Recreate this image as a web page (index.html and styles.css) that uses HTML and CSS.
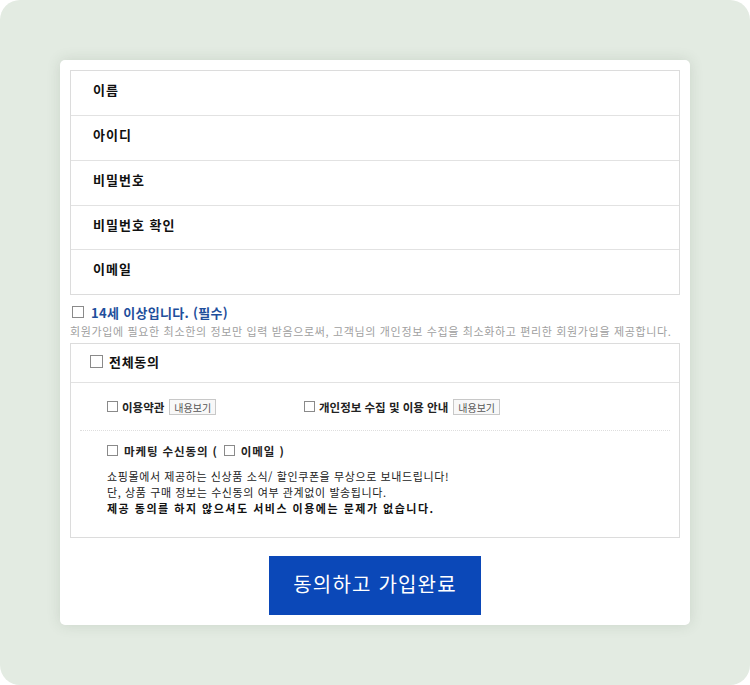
FILE: index.html
```html
<!DOCTYPE html>
<html lang="ko">
<head>
    <meta charset="UTF-8">
    <title>회원가입</title>
    <link rel="stylesheet" href="styles.css">
</head>
<body>

    <div class="frame">
        <div class="card">

            <ul class="fields">
                <li>이름</li>
                <li>아이디</li>
                <li>비밀번호</li>
                <li>비밀번호 확인</li>
                <li>이메일</li>
            </ul>

            <div class="age-check">
                <span class="box"></span>
                <span class="age-text">14세 이상입니다. (필수)</span>
            </div>
            <p class="notice">회원가입에 필요한 최소한의 정보만 입력 받음으로써, 고객님의 개인정보 수집을 최소화하고 편리한 회원가입을 제공합니다.</p>

            <div class="agree">
                <div class="agree-all">
                    <span class="box"></span>
                    <span>전체동의</span>
                </div>

                <div class="agree-body">
                    <div class="agree-row">
                        <div class="agree-item item-terms">
                            <span class="box small"></span>
                            <span>이용약관</span>
                            <button class="view-btn">내용보기</button>
                        </div>
                        <div class="agree-item">
                            <span class="box small"></span>
                            <span>개인정보 수집 및 이용 안내</span>
                            <button class="view-btn">내용보기</button>
                        </div>
                    </div>

                    <div class="agree-marketing">
                        <div class="agree-item marketing-label">
                            <span class="box small"></span>
                            <span>마케팅 수신동의 (</span>
                            <span class="box small"></span>
                            <span>이메일 )</span>
                        </div>
                        <p class="marketing-text">
                            쇼핑몰에서 제공하는 신상품 소식/ 할인쿠폰을 무상으로 보내드립니다!<br>
                            단, 상품 구매 정보는 수신동의 여부 관계없이 발송됩니다.<br>
                            <strong>제공 동의를 하지 않으셔도 서비스 이용에는 문제가 없습니다.</strong>
                        </p>
                    </div>
                </div>
            </div>

            <div class="submit-wrap">
                <button class="submit-btn">동의하고 가입완료</button>
            </div>

        </div>
    </div>

</body>
</html>
```

FILE: styles.css
```css
* {
    margin: 0;
    padding: 0;
    box-sizing: border-box;
}

body {
    font-family: "Noto Sans CJK KR", "Noto Sans", sans-serif;
    background-color: #fff;
    color: #222;
}

.frame {
    width: 750px;
    height: 685px;
    padding: 60px;
    background-color: #e3ebe2;
    border-radius: 20px;
}

.card {
    width: 630px;
    height: 565px;
    padding: 10px;
    background-color: #fff;
    border-radius: 5px;
    box-shadow: 0 0 14px rgba(60, 80, 60, 0.15);
}

/* input labels */
.fields {
    list-style-type: none;
    width: 610px;
    border: 1px solid #dcdcdc;
}

    .fields li {
        height: 45px;
        padding: 0 0 7px 22px;
        display: flex;
        align-items: center;
        font-size: 13px;
        font-weight: bold;
        color: #111;
        letter-spacing: 1px;
        border-top: 1px solid #e2e2e2;
    }

        .fields li:first-child {
            height: 44px;
            border-top: none;
        }

        .fields li:nth-child(4) {
            height: 44px;
        }

.box {
    display: inline-block;
    width: 12px;
    height: 12px;
    border: 1px solid #8a8a8a;
    background-color: #fff;
}

    .box.small {
        width: 11px;
        height: 11px;
    }

.age-check {
    display: flex;
    align-items: center;
    gap: 7px;
    margin-top: 9px;
    padding-left: 2px;
    height: 16px;
}

.age-text {
    font-size: 13px;
    font-weight: bold;
    color: #1f4f9c;
    letter-spacing: 0.3px;
}

.notice {
    margin-top: 3px;
    font-size: 11px;
    color: #a0a0a0;
    letter-spacing: 0.65px;
    white-space: nowrap;
    height: 16px;
}

/* agreements */
.agree {
    width: 610px;
    height: 195px;
    margin-top: 4px;
    border: 1px solid #dcdcdc;
}

.agree-all {
    height: 39px;
    display: flex;
    align-items: center;
    gap: 6px;
    padding: 0 0 4px 19px;
    font-size: 13px;
    font-weight: bold;
    color: #111;
    letter-spacing: 0.7px;
    border-bottom: 1px solid #e2e2e2;
}

    .agree-all .box {
        width: 13px;
        height: 13px;
    }

.agree-body {
    padding: 0 9px;
}

.agree-row {
    display: flex;
    height: 48px;
    align-items: center;
    padding-left: 27px;
    border-bottom: 1px dotted #dedede;
}

.agree-item {
    display: flex;
    align-items: center;
    gap: 4px;
    font-size: 11.5px;
    font-weight: bold;
    color: #222;
}

.item-terms {
    width: 197px;
}

.view-btn {
    margin-left: 1px;
    padding: 0 4px;
    height: 16px;
    font-family: inherit;
    font-size: 10px;
    font-weight: normal;
    color: #555;
    background-color: #f8f8f8;
    border: 1px solid #c8c8c8;
}

.agree-marketing {
    padding: 11px 0 0 27px;
}

    .agree-marketing .agree-item {
        height: 17px;
    }

.marketing-label {
    gap: 6px;
    letter-spacing: 0.9px;
}

.marketing-text {
    margin-top: 9px;
    font-size: 11px;
    line-height: 16px;
    color: #222;
    letter-spacing: 0.6px;
}

    .marketing-text strong {
        font-weight: bold;
        color: #111;
        letter-spacing: 1.5px;
    }

/* submit */
.submit-wrap {
    display: flex;
    justify-content: center;
    margin-top: 18px;
}

.submit-btn {
    width: 212px;
    height: 59px;
    padding-bottom: 4px;
    border: none;
    background-color: #0b48b8;
    color: #fff;
    font-family: inherit;
    font-size: 20px;
    letter-spacing: 1.2px;
    cursor: pointer;
}
```
